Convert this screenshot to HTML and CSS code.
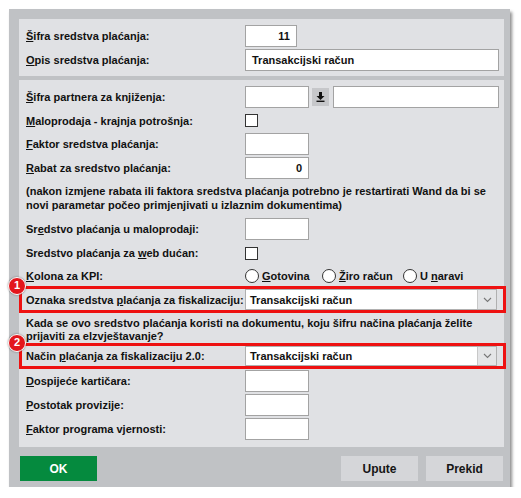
FILE: index.html
```html
<!DOCTYPE html>
<html>
<head>
<meta charset="utf-8">
<link rel="stylesheet" href="styles.css">
</head>
<body>
<div class="dialog">
  <div class="panel p1">
    <div class="row"><span class="lbl"><u>Š</u>ifra sredstva plaćanja:</span><div class="inp w52 num">11</div></div>
    <div class="row"><span class="lbl"><u>O</u>pis sredstva plaćanja:</span><div class="inp w254">Transakcijski račun</div></div>
  </div>
  <div class="panel p2">
    <div class="row"><span class="lbl"><u>Š</u>ifra partnera za knjiženja:</span><div class="inp w64"></div><div class="lookup"><svg width="9" height="10" viewBox="0 0 9 10"><path d="M3 0h3v4h2.5L4.5 8 0.5 4H3z" fill="#111"/><rect x="0.5" y="8.6" width="8" height="1.4" fill="#111"/></svg></div><div class="inp w166"></div></div>
    <div class="row h23"><span class="lbl"><u>M</u>aloprodaja - krajnja potrošnja:</span><div class="chk"></div></div>
    <div class="row"><span class="lbl"><u>F</u>aktor sredstva plaćanja:</span><div class="inp w64"></div></div>
    <div class="row"><span class="lbl"><u>R</u>abat za sredstvo plaćanja:</span><div class="inp w64 num">0</div></div>
    <p class="note">(nakon izmjene rabata ili faktora sredstva plaćanja potrebno je restartirati Wand da bi se novi parametar počeo primjenjivati u izlaznim dokumentima)</p>
    <div class="row"><span class="lbl">Sr<u>e</u>dstvo plaćanja u maloprodaji:</span><div class="inp w64"></div></div>
    <div class="row"><span class="lbl">Sredstvo plaćanja za <u>w</u>eb dućan:</span><div class="chk"></div></div>
    <div class="row h21"><span class="lbl"><u>K</u>olona za KPI:</span>
      <div class="radios">
        <span class="opt o1"><span class="radio"></span><span><u>G</u>otovina</span></span>
        <span class="opt o2"><span class="radio"></span><span><u>Ž</u>iro račun</span></span>
        <span class="opt"><span class="radio"></span><span>U <u>n</u>aravi</span></span>
      </div>
    </div>
    <div class="mark m1"><span class="badge">1</span><span class="lbl lm">Oznaka sredstva <u>p</u>laćanja za fiskalizaciju:</span><div class="combo c1"><span class="cval">Transakcijski račun</span><span class="arrow"><svg width="9" height="6" viewBox="0 0 9 6"><path d="M1 1l3.5 3.5L8 1" fill="none" stroke="#777" stroke-width="1.1"/></svg></span></div></div>
    <p class="question">Kada se ovo sredstvo plaćanja koristi na dokumentu, koju šifru načina plaćanja želite prijaviti za elzvještavanje?</p>
    <div class="mark m2"><span class="badge">2</span><span class="lbl lm">Način <u>p</u>laćanja za fiskalizaciju 2.0:</span><div class="combo c2"><span class="cval">Transakcijski račun</span><span class="arrow"><svg width="9" height="6" viewBox="0 0 9 6"><path d="M1 1l3.5 3.5L8 1" fill="none" stroke="#777" stroke-width="1.1"/></svg></span></div></div>
    <div class="row"><span class="lbl"><u>D</u>ospijeće kartičara:</span><div class="inp w64"></div></div>
    <div class="row"><span class="lbl"><u>P</u>ostotak provizije:</span><div class="inp w64"></div></div>
    <div class="row"><span class="lbl"><u>F</u>aktor programa vjernosti:</span><div class="inp w64"></div></div>
  </div>
  <div class="buttons">
    <button class="btn ok">OK</button>
    <span class="spacer"></span>
    <button class="btn">Upute</button>
    <button class="btn">Prekid</button>
  </div>
</div>
</body>
</html>
```

FILE: styles.css
```css
* { box-sizing: border-box; }
html, body { margin: 0; padding: 0; background: #fff; }
body {
  font-family: "Liberation Sans", Arial, sans-serif;
  font-size: 11px;
  font-weight: bold;
  color: #111;
}
.dialog {
  margin: 9px 0 0 9px;
  width: 501px;
  height: 478px;
  background: #c0c2c5;
  padding: 10px 6px 6px 10px;
  box-shadow: 2px 3px 3px rgba(0,0,0,0.45);
  display: flex;
  flex-direction: column;
}
.panel {
  background: #e0e1e4;
  width: 485px;
  padding-left: 7px;
}
.p1 { height: 57px; padding-top: 5px; }
.p2 { height: 367px; margin-top: 4px; padding-top: 5px; }
.row {
  display: flex;
  align-items: center;
  height: 24px;
}
.row.h23 { height: 23px; }
.row.h21 { height: 21px; }
.lbl {
  width: 219px;
  flex: none;
  white-space: nowrap;
}
u { text-decoration: underline; text-underline-offset: 1px; }
.inp {
  height: 22px;
  background: #fff;
  border: 1px solid #a3a3a3;
  padding: 0 6px;
  line-height: 20px;
  white-space: nowrap;
}
.num { text-align: right; }
.w52 { width: 52px; }
.w64 { width: 64px; }
.w166 { width: 166px; }
.w254 { width: 254px; }
.lookup {
  width: 17px;
  height: 18px;
  margin: 0 4px 0 3px;
  background: #c6c7ca;
  display: flex;
  align-items: center;
  justify-content: center;
}
.chk {
  width: 13px;
  height: 13px;
  background: #fff;
  border: 1px solid #333;
}
.note {
  margin: 4px 0 5px;
  height: 28px;
  line-height: 14px;
  width: 465px;
}
.radios { display: flex; align-items: center; }
.opt { display: flex; align-items: center; white-space: nowrap; }
.o1 { width: 77px; }
.o2 { width: 81px; }
.radio {
  width: 14px;
  height: 14px;
  border-radius: 50%;
  border: 1px solid #333;
  background: #fff;
  margin-right: 3px;
}
.mark {
  position: relative;
  display: flex;
  align-items: center;
  margin-left: -7px;
  margin-right: -2px;
  border: 3px solid #ee1111;
  padding-left: 4px;
}
.m1 { height: 27px; }
.m2 { height: 26px; }
.lm { width: 219px; }
.badge {
  position: absolute;
  left: -14px;
  top: -12px;
  width: 18px;
  height: 18px;
  border-radius: 50%;
  background: #e3161c;
  border: 1.5px solid #fff;
  box-shadow: 0 0 2px rgba(0,0,0,0.5);
  color: #fff;
  font-size: 11px;
  line-height: 15px;
  text-align: center;
}
.combo {
  width: 252px;
  background: #fff;
  border: 1px solid #b0b0b0;
  display: flex;
  align-items: stretch;
}
.c1 { height: 21px; }
.c2 { height: 20px; }
.cval { flex: 1; padding-left: 4px; display: flex; align-items: center; }
.arrow {
  width: 19px;
  background: #e4e5e7;
  border-left: 1px solid #c8c8c8;
  display: flex;
  align-items: center;
  justify-content: center;
}
.question {
  margin: 0;
  height: 30px;
  padding-top: 4px;
  line-height: 13px;
}
.buttons {
  display: flex;
  margin-top: 9px;
  padding: 0 1px;
  gap: 8px;
}
.spacer { flex: 1; }
.btn {
  width: 77px;
  height: 25px;
  border: none;
  background: #d5d6d9;
  font-family: "Liberation Sans", Arial, sans-serif;
  font-size: 12px;
  font-weight: bold;
  color: #151515;
  padding: 0;
}
.btn.ok { background: #058a3e; color: #fff; }
```
